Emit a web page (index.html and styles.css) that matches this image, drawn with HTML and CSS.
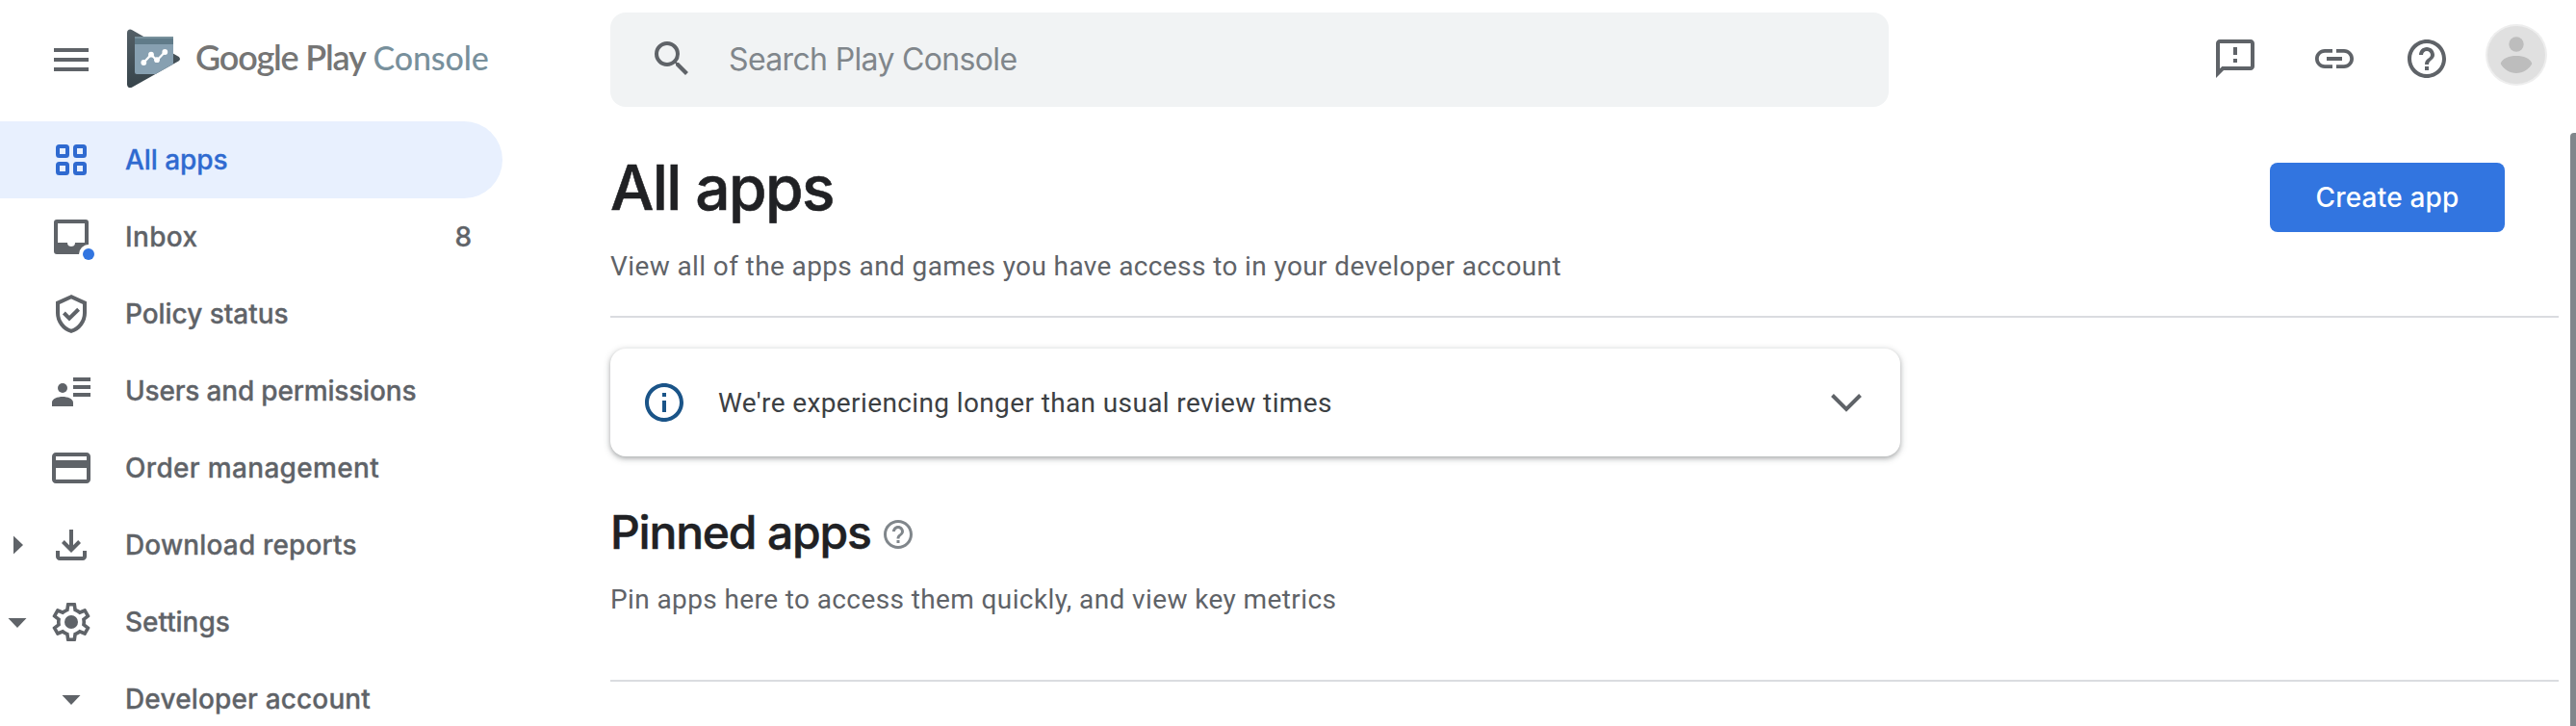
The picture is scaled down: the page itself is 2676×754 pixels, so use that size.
FILE: index.html
```
<!DOCTYPE html>
<html lang="en">
<head>
<meta charset="utf-8">
<title>All apps | Google Play Console</title>
<link rel="stylesheet" href="styles.css">
</head>
<body>
<div class="page">
  <header class="header">
    <div class="brand">
      <svg class="icon" viewBox="0 0 48 48"><path d="M6 12h36v4H6zM6 22h36v4H6zM6 32h36v4H6z"/></svg>
      <svg class="logo" viewBox="0 0 56 62">
        <defs>
          <linearGradient id="tri" x1="0" y1="0" x2="0" y2="1"><stop offset="0" stop-color="#535f66"/><stop offset="1" stop-color="#37444b"/></linearGradient>
        </defs>
        <path fill="url(#tri)" d="M0 4.2C0 1 2.8-.3 5.4 1.2L53 28.6c2.6 1.500 2.600 3.700 0 5.200L5.400 60.500C2.800 62 0 60.700 0 57.500z"/>
        <path fill="#87a0b1" d="M8 8h40v28.500L29.500 47H10a2 2 0 0 1-2-2z"/>
        <path fill="#607b89" d="M8 8h40v8H8z"/>
        <path fill="#78909c" d="M8 8h40v2H8z"/>
        <path fill="none" stroke="#fff" stroke-width="2.200" d="M17.300 35 25 26.700l6 6 8.300-8.700"/>
        <g fill="#fff"><circle cx="17.300" cy="35" r="2.900"/><circle cx="25" cy="26.700" r="2.900"/><circle cx="31" cy="32.200" r="2.900"/><circle cx="39.300" cy="24" r="2.900"/></g>
      </svg>
      <div class="wordmark"><span class="word-play">Google Play</span><span class="word-console">Console</span></div>
    </div>
    <div class="search">
      <svg class="icon" viewBox="0 0 24 24"><path d="M15.500 14h-.79l-.28-.27A6.471 6.471 0 0 0 16 9.500 6.500 6.500 0 1 0 9.500 16c1.610 0 3.090-.59 4.230-1.570l.27.28v.79l5 4.990L20.490 19l-4.990-5zm-6 0C7.010 14 5 11.990 5 9.500S7.010 5 9.500 5 14 7.010 14 9.500 11.990 14 9.500 14z"/></svg>
      <span class="search-text">Search Play Console</span>
    </div>
    <div class="actions">
      <svg class="icon" viewBox="0 0 24 24"><path d="M20 2H4c-1.100 0-2 .9-2 2v18l4-4h14c1.100 0 2-.9 2-2V4c0-1.100-.9-2-2-2zm0 14H5.170L4 17.170V4h16v12zM11 6h2v4h-2zm0 6h2v2h-2z"/></svg>
      <svg class="icon link" viewBox="0 0 24 24"><path d="M3.900 12c0-1.710 1.390-3.100 3.100-3.100h4V7H7c-2.760 0-5 2.240-5 5s2.240 5 5 5h4v-1.900H7c-1.710 0-3.100-1.390-3.100-3.100zM8 13h8v-2H8v2zm9-6h-4v1.900h4c1.710 0 3.100 1.390 3.100 3.100s-1.390 3.100-3.100 3.100h-4V17h4c2.760 0 5-2.240 5-5s-2.240-5-5-5z"/></svg>
      <svg class="icon help" viewBox="0 0 24 24"><path d="M11 18h2v-2h-2v2zm1-16C6.480 2 2 6.480 2 12s4.480 10 10 10 10-4.480 10-10S17.520 2 12 2zm0 18c-4.410 0-8-3.590-8-8s3.590-8 8-8 8 3.590 8 8-3.590 8-8 8zm0-14c-2.210 0-4 1.790-4 4h2c0-1.100.9-2 2-2s2 .9 2 2c0 2-3 1.750-3 5h2c0-2.250 3-2.500 3-5 0-2.210-1.790-4-4-4z"/></svg>
      <svg class="avatar" viewBox="0 0 64 64"><circle cx="32" cy="32" r="32" fill="#eee"/><circle cx="32" cy="32" r="30" fill="#e0e0e0"/><g fill="#bdbdbd"><circle cx="32" cy="21" r="7.700"/><path d="M15.700 41C17.500 35.500 24.500 33 32 33s14.500 2.500 16.300 8C45.500 47 38.500 51 32 51s-13.500-4-16.300-10z"/></g></svg>
    </div>
  </header>

  <div class="body">
    <nav class="nav">
      <a class="item active"><span class="caret"></span>
        <svg class="icon" viewBox="0 0 48 48"><g fill="none" stroke="currentColor" stroke-width="4"><rect x="10" y="10" width="10" height="10" rx="1.500"/><rect x="28" y="10" width="10" height="10" rx="1.500"/><rect x="10" y="28" width="10" height="10" rx="1.500"/><rect x="28" y="28" width="10" height="10" rx="1.500"/></g></svg>
        <span class="label">All apps</span></a>
      <a class="item"><span class="caret"></span>
        <svg class="icon" viewBox="0 0 48 48"><path fill-rule="evenodd" d="M9 6h30a3 3 0 0 1 3 3v30a3 3 0 0 1-3 3H9a3 3 0 0 1-3-3V9a3 3 0 0 1 3-3zM10 10v20h10a4 4 0 0 0 8 0h10V10z"/><circle cx="42" cy="42" r="10" fill="#fff"/><circle cx="42" cy="42" r="6" fill="#3275e0"/></svg>
        <span class="label wide">Inbox</span><span class="count">8</span></a>
      <a class="item"><span class="caret"></span>
        <svg class="icon" viewBox="0 0 24 24"><g fill="none" stroke="currentColor" stroke-width="2"><path d="M12 3.100 5 6.300v5.200c0 4.300 2.900 8.200 7 9.450 4.100-1.250 7-5.150 7-9.450V6.300z"/><path d="M8.200 11.500 11 14.300l4.800-4.700"/></g></svg>
        <span class="label">Policy status</span></a>
      <a class="item"><span class="caret"></span>
        <svg class="icon" viewBox="0 0 48 48"><circle cx="15" cy="21" r="5"/><path d="M4 40v-4c0-4 6-6 11-6s11 2 11 6v4zM26 10h18v4H26zM26 18h18v4H26zM26 26h18v4H26z"/></svg>
        <span class="label tight">Users and permissions</span></a>
      <a class="item"><span class="caret"></span>
        <svg class="icon" viewBox="0 0 24 24"><path d="M20 4H4c-1.110 0-1.990.89-1.990 2L2 18c0 1.110.89 2 2 2h16c1.110 0 2-.89 2-2V6c0-1.110-.89-2-2-2zm0 14H4v-6h16v6zm0-10H4V6h16v2z"/></svg>
        <span class="label wide">Order management</span></a>
      <a class="item"><svg class="caret" viewBox="0 0 20 20"><path d="M6 .5 16 10 6 19.500z"/></svg>
        <svg class="icon" viewBox="0 0 24 24"><path d="m12 16-5-5 1.400-1.450 2.600 2.600V4h2v8.150l2.600-2.600L17 11zm-6 4q-.825 0-1.413-.587Q4 18.825 4 18v-3h2v3h12v-3h2v3q0 .825-.587 1.413Q18.825 20 18 20z"/></svg>
        <span class="label loose">Download reports</span></a>
      <a class="item"><svg class="caret" viewBox="0 0 20 20"><path d="M.5 6h19L10 16z"/></svg>
        <svg class="icon" viewBox="0 0 24 24"><defs><path id="gear" d="M19.430 12.980c.04-.32.07-.64.07-.98s-.03-.66-.07-.98l2.110-1.650c.19-.15.24-.42.12-.64l-2-3.460c-.12-.22-.39-.3-.61-.22l-2.490 1c-.52-.4-1.080-.73-1.690-.98l-.38-2.650C14.460 2.180 14.250 2 14 2h-4c-.25 0-.46.180-.49.420l-.38 2.650c-.61.25-1.170.590-1.690.980l-2.490-1c-.23-.09-.49 0-.61.220l-2 3.460c-.13.220-.07.490.120.640l2.110 1.650c-.04.320-.07.650-.07.980s.03.660.07.980l-2.110 1.650c-.19.150-.24.420-.12.640l2 3.460c.12.220.39.300.61.220l2.490-1c.52.400 1.080.730 1.690.980l.38 2.650c.03.240.24.420.490.420h4c.25 0 .46-.18.490-.42l.38-2.650c.61-.25 1.170-.59 1.690-.98l2.490 1c.23.090.49 0 .61-.22l2-3.460c.12-.22.07-.49-.12-.64z"/><clipPath id="gearclip"><use href="#gear"/></clipPath></defs><use href="#gear" fill="none" stroke="currentColor" stroke-width="3.600" clip-path="url(#gearclip)"/><circle cx="12" cy="12" r="3.500"/></svg>
        <span class="label">Settings</span></a>
      <a class="item"><span class="caret"></span>
        <svg class="icon" viewBox="0 0 48 48"><path d="M14.500 20h19L24 30z"/></svg>
        <span class="label loose">Developer account</span></a>
    </nav>

    <main class="main">
      <section class="intro">
        <div>
          <h1 class="title">All apps</h1>
          <p class="text">View all of the apps and games you have access to in your developer account</p>
        </div>
        <button class="create">Create app</button>
      </section>
      <section class="notice">
        <svg class="icon info" viewBox="0 0 24 24"><path d="M11 7h2v2h-2zm0 4h2v6h-2zm1-9C6.480 2 2 6.480 2 12s4.480 10 10 10 10-4.480 10-10S17.520 2 12 2zm0 18c-4.410 0-8-3.590-8-8s3.590-8 8-8 8 3.590 8 8-3.590 8-8 8z"/></svg>
        <p class="text notice-text">We're experiencing longer than usual review times</p>
        <svg class="icon" viewBox="0 0 48 48"><path fill="none" stroke="currentColor" stroke-width="4" d="M9.500 16.500 24 31l14.500-14.500"/></svg>
      </section>
      <section class="pinned">
        <div class="pinned-head">
          <h2 class="subtitle">Pinned apps</h2>
          <svg class="hint" viewBox="0 0 24 24"><path d="M11 18h2v-2h-2v2zm1-16C6.480 2 2 6.480 2 12s4.480 10 10 10 10-4.480 10-10S17.520 2 12 2zm0 18c-4.410 0-8-3.590-8-8s3.590-8 8-8 8 3.590 8 8-3.590 8-8 8zm0-14c-2.210 0-4 1.790-4 4h2c0-1.100.9-2 2-2s2 .9 2 2c0 2-3 1.750-3 5h2c0-2.250 3-2.500 3-5 0-2.210-1.790-4-4-4z"/></svg>
        </div>
        <p class="text">Pin apps here to access them quickly, and view key metrics</p>
      </section>
    </main>
    <div class="scrollbar"></div>
  </div>
</div>
</body>
</html>
```
FILE: styles.css
```
* { box-sizing: border-box; }
body { margin: 0; background: #fff; color: #5f6368; font-family: Inter, Roboto, sans-serif; }
h1, h2, p { margin: 0; }
svg { display: block; flex: none; fill: currentColor; }
.page { display: flex; flex-direction: column; height: 754px; overflow: hidden; }

.header { display: flex; flex: none; align-items: center; height: 126px; padding-bottom: 2px; }
.brand { display: flex; align-items: center; width: 634px; padding-left: 50px; }
.icon { width: 48px; height: 48px; }
.logo { width: 56px; height: 62px; margin: 0 15px 2px 34px; }
.wordmark { display: flex; align-items: baseline; padding-bottom: 7px; font-family: Lato, sans-serif; white-space: nowrap; }
.word-play { font-size: 36px; font-weight: 600; letter-spacing: -1.2px; color: #757575; }
.word-console { margin-left: 8px; font-size: 34px; font-weight: 500; letter-spacing: -0.1px; color: #78909c; }
.search { display: flex; align-items: center; width: 1328px; height: 98px; padding: 0 0 2px 40px; gap: 35px; border-radius: 16px; background: #f1f3f4; }
.search-text { padding-top: 1px; font-size: 32px; letter-spacing: -0.65px; color: #80868b; }
.actions { display: flex; align-items: center; margin-left: auto; padding: 0 30px 2px 0; }
.link { margin-left: 55px; }
.help { margin-left: 48px; }
.avatar { width: 64px; height: 64px; margin: 0 0 8px 37px; }

.body { display: flex; flex: 1; min-height: 0; }
.nav { width: 634px; flex: none; }
.item { display: flex; align-items: center; width: 522px; height: 80px; padding: 0 32px 0 8px; font-size: 28px; font-weight: 500; letter-spacing: -0.05px; -webkit-text-stroke: 0.3px currentColor; }
.active { border-radius: 0 40px 40px 0; background: #e8f0fe; color: #2f6ad0; }
.caret { width: 20px; height: 20px; margin-right: 22px; flex: none; }
.label { margin-left: 32px; white-space: nowrap; }
.wide { letter-spacing: 0.33px; }
.loose { letter-spacing: 0.15px; }
.tight { letter-spacing: -0.18px; }
.count { margin-left: auto; }

.main { flex: 1; margin-right: 12px; }
.intro { display: flex; justify-content: space-between; height: 204px; padding: 29px 56px 0 0; border-bottom: 2px solid #dadce0; }
.title { margin-bottom: 22px; font-size: 64px; font-weight: 500; line-height: 80px; letter-spacing: -1.6px; color: #202124; -webkit-text-stroke: 0.6px currentColor; }
.text { font: 400 28px/40px Roboto, sans-serif; letter-spacing: 0.39px; }
.create { width: 244px; height: 72px; margin-top: 14px; padding: 0; border: 0; border-radius: 8px; background: #3275e0; color: #fff; font: 500 28px/72px Inter, sans-serif; letter-spacing: 0.2px; }
.notice { display: flex; align-items: center; width: 1340px; height: 112px; margin-top: 32px; padding: 0 32px; border-radius: 16px; background: #fff; box-shadow: 0 2px 4px rgba(60, 64, 67, 0.3), 0 2px 6px 2px rgba(60, 64, 67, 0.15); }
.info { color: #1a5488; }
.notice-text { flex: 1; margin-left: 32px; padding-top: 1px; letter-spacing: 0.38px; color: #3c4043; }
.pinned { height: 234px; padding-top: 47px; border-bottom: 2px solid #dadce0; }
.pinned-head { display: flex; align-items: center; margin-bottom: 18px; }
.subtitle { font-size: 48px; font-weight: 500; line-height: 64px; letter-spacing: -1.2px; color: #202124; -webkit-text-stroke: 0.5px currentColor; }
.hint { width: 36px; height: 36px; margin: 4px 0 0 10px; color: #80868b; }
.scrollbar { width: 6px; margin-top: 12px; border-radius: 4px 0 0 0; background: #80868b; }
```
